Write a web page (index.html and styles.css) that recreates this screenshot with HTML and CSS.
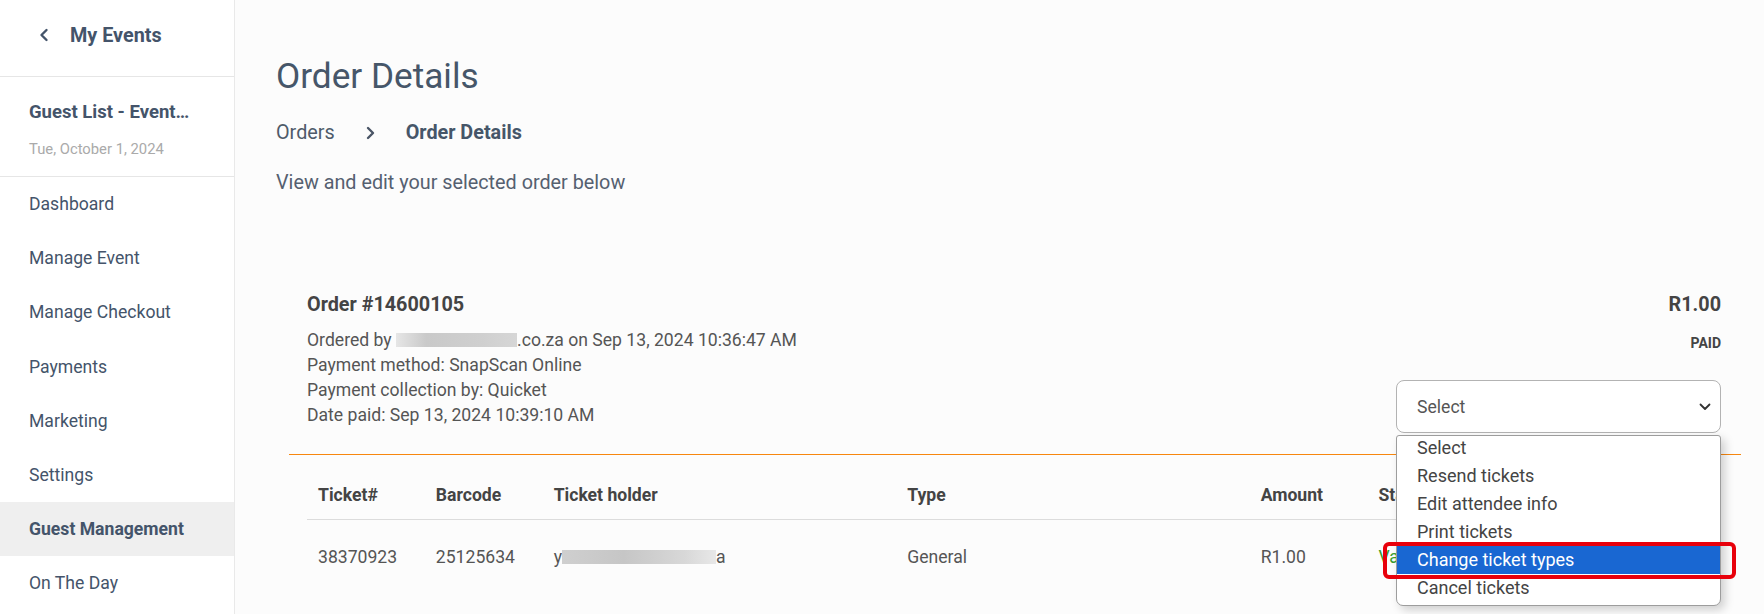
FILE: index.html
```html
<!DOCTYPE html>
<html lang="en">
    <head>
        <meta charset="UTF-8" />
        <meta name="viewport" content="width=device-width, initial-scale=1.0" />
        <title>Order Details</title>
        <link rel="stylesheet" href="styles.css">
    </head>
    <body>
        <div class="app">
            <aside class="sidebar">
                <a class="back" href="#">
                    <svg class="back-icon" viewBox="0 0 12 14" width="12" height="14">
                        <path d="M 8.5 2 L 3.5 7 L 8.5 12" fill="none" stroke="#44546a" stroke-width="2.4" stroke-linecap="round" stroke-linejoin="round" />
                    </svg>
                    <span>My Events</span>
                </a>

                <div class="event">
                    <div class="event-name">Guest List - Events 2024</div>
                    <div class="event-date">Tue, October 1, 2024</div>
                </div>

                <nav class="nav">
                    <a class="nav-item" href="#">Dashboard</a>
                    <a class="nav-item" href="#">Manage Event</a>
                    <a class="nav-item" href="#">Manage Checkout</a>
                    <a class="nav-item" href="#">Payments</a>
                    <a class="nav-item" href="#">Marketing</a>
                    <a class="nav-item" href="#">Settings</a>
                    <a class="nav-item active" href="#">Guest Management</a>
                    <a class="nav-item" href="#">On The Day</a>
                </nav>
            </aside>

            <main class="main">
                <h1 class="title">Order Details</h1>

                <div class="crumbs">
                    <span>Orders</span>
                    <svg class="crumb-sep" viewBox="0 0 11 14" width="11" height="14">
                        <path d="M 3 2 L 8 7 L 3 12" fill="none" stroke="#4a5566" stroke-width="2.4" stroke-linecap="round" stroke-linejoin="round" />
                    </svg>
                    <strong>Order Details</strong>
                </div>

                <p class="lead">View and edit your selected order below</p>

                <section class="order">
                    <div class="order-head">
                        <div class="order-info">
                            <div class="order-no">Order #14600105</div>
                            <div class="order-lines">
                                <div>Ordered by <span class="blur blur-email"></span>.co.za on Sep 13, 2024 10:36:47 AM</div>
                                <div>Payment method: SnapScan Online</div>
                                <div>Payment collection by: Quicket</div>
                                <div>Date paid: Sep 13, 2024 10:39:10 AM</div>
                            </div>
                        </div>

                        <div class="order-side">
                            <div class="order-total">R1.00</div>
                            <div class="order-status">PAID</div>

                            <div class="select-wrap">
                                <div class="select">
                                    <span>Select</span>
                                    <svg class="select-arrow" viewBox="0 0 12 8" width="12" height="8">
                                        <path d="M 1.5 1.5 L 6 6 L 10.5 1.5" fill="none" stroke="#333" stroke-width="1.8" stroke-linecap="round" stroke-linejoin="round" />
                                    </svg>
                                </div>
                                <ul class="options">
                                    <li>Select</li>
                                    <li>Resend tickets</li>
                                    <li>Edit attendee info</li>
                                    <li>Print tickets</li>
                                    <li class="picked">Change ticket types<span class="mark"></span></li>
                                    <li>Cancel tickets</li>
                                </ul>
                            </div>
                        </div>
                    </div>

                    <table class="tickets">
                        <colgroup>
                            <col class="col-s">
                            <col class="col-s">
                            <col class="col-l">
                            <col class="col-l">
                            <col class="col-s">
                            <col class="col-l">
                        </colgroup>
                        <thead>
                            <tr>
                                <th>Ticket#</th>
                                <th>Barcode</th>
                                <th>Ticket holder</th>
                                <th>Type</th>
                                <th>Amount</th>
                                <th>Status</th>
                            </tr>
                        </thead>
                        <tbody>
                            <tr>
                                <td>38370923</td>
                                <td>25125634</td>
                                <td>y<span class="blur blur-holder"></span>a</td>
                                <td>General</td>
                                <td>R1.00</td>
                                <td class="valid">Valid</td>
                            </tr>
                        </tbody>
                    </table>
                </section>
            </main>
        </div>
    </body>
</html>
```

FILE: styles.css
```css
html,
body {
    height: 100%;
}

body {
    margin: 0;
    overflow: hidden;
    background-color: #fcfcfc;
    font-family: Roboto, "Liberation Sans", Arial, sans-serif;
    color: #555;
}

a {
    text-decoration: none;
    color: inherit;
}

.app {
    display: flex;
    height: 100%;
}

/* sidebar */

.sidebar {
    flex-shrink: 0;
    width: 234px;
    min-width: 0;
    background-color: #fff;
    border-right: 1px solid #e9e9e9;
    color: #44546a;
}

.back {
    display: flex;
    align-items: center;
    gap: 20px;
    height: 77px;
    padding: 0 0 6px 38px;
    box-sizing: border-box;
    border-bottom: 1px solid #e6e6e6;
    font-size: 19.8px;
    font-weight: 700;
}

.event {
    height: 100px;
    padding: 21px 40px 0 29px;
    box-sizing: border-box;
    border-bottom: 1px solid #e6e6e6;
}

.event-name {
    font-size: 18.5px;
    font-weight: 700;
    line-height: 28px;
    white-space: nowrap;
    overflow: hidden;
    text-overflow: ellipsis;
}

.event-date {
    margin-top: 13px;
    font-size: 14.8px;
    line-height: 20px;
    color: #aaa;
}

.nav {
    display: flex;
    flex-direction: column;
}

.nav-item {
    display: flex;
    align-items: center;
    height: 54.2px;
    padding: 0 29px;
    font-size: 17.6px;
}

.nav-item.active {
    background-color: #efefef;
    font-weight: 700;
}

/* main */

.main {
    flex: 1;
    padding: 55px 23px 0 41px;
    min-width: 0;
}

.title {
    margin: 0;
    font-size: 35.2px;
    font-weight: 400;
    line-height: 42px;
    color: #465669;
}

.crumbs {
    display: flex;
    align-items: center;
    gap: 30px;
    margin-top: 24px;
    font-size: 19.8px;
    line-height: 24px;
    color: #4f5b6a;
}

.crumbs strong {
    color: #465669;
}

.lead {
    margin: 26px 0 0;
    font-size: 19.8px;
    line-height: 24px;
    color: #556070;
}

.order {
    margin: 98px 0 0 13px;
    font-size: 17.6px;
}

.order-head {
    display: flex;
    justify-content: space-between;
    padding: 0 20px 21px 18px;
    border-bottom: 1.5px solid #f7870f;
}

.order-no,
.order-total {
    font-size: 19.8px;
    font-weight: 700;
    line-height: 24px;
    color: #444;
}

.order-lines {
    margin-top: 11px;
    line-height: 25px;
}

.blur {
    display: inline-block;
    height: 14px;
    vertical-align: -1px;
    background: linear-gradient(90deg, #e6e6e6, #c9c9c9 25%, #cfcfcf 70%, #d6d6d6);
}

.blur-email {
    width: 121px;
}

.blur-holder {
    width: 154px;
    background: linear-gradient(90deg, #cfcfcf, #c6c6c6 40%, #d8d8d8 80%, #e8e8e8);
}

.order-side {
    display: flex;
    flex-direction: column;
    align-items: flex-end;
}

.order-status {
    margin-top: 16px;
    font-size: 14px;
    font-weight: 700;
    line-height: 20px;
    color: #444;
}

.select-wrap {
    position: relative;
    width: 325px;
    margin-top: 27px;
}

.select {
    display: flex;
    align-items: center;
    justify-content: space-between;
    height: 53px;
    padding: 0 9px 0 20px;
    box-sizing: border-box;
    background-color: #fff;
    border: 1px solid #b3b3b3;
    border-radius: 8px;
    color: #555;
}

.options {
    position: absolute;
    top: 55px;
    left: 0;
    right: 0;
    z-index: 2;
    margin: 0;
    padding: 0 0 3px;
    list-style: none;
    background-color: #fff;
    border: 1px solid #9d9d9d;
    border-radius: 3px 3px 7px 7px;
    box-shadow: 4px 4px 10px rgba(0, 0, 0, 0.18);
    font-size: 18px;
    color: #444;
}

.options li {
    position: relative;
    height: 28px;
    padding-left: 20px;
    line-height: 28px;
}

.options li:first-child {
    margin-top: -2px;
}

.options .picked {
    background-color: #1967d2;
    color: #fff;
}

.mark {
    position: absolute;
    top: -4px;
    bottom: -5px;
    left: -14px;
    right: -16px;
    border: 4px solid #e8000b;
    border-radius: 6px;
}

/* tickets table */

.tickets {
    width: calc(100% - 38px);
    margin: 16px 20px 0 18px;
    border-collapse: collapse;
    table-layout: fixed;
}

.col-s {
    width: 8.333%;
}

.col-l {
    width: 25%;
}

.tickets th {
    height: 48px;
    padding: 0 11px;
    border-bottom: 1.5px solid #dcdcdc;
    text-align: left;
    font-weight: 700;
    color: #444;
}

.tickets td {
    padding: 25px 11px;
    line-height: 24px;
    white-space: nowrap;
}

.valid {
    color: #3a9c2e;
}
```
